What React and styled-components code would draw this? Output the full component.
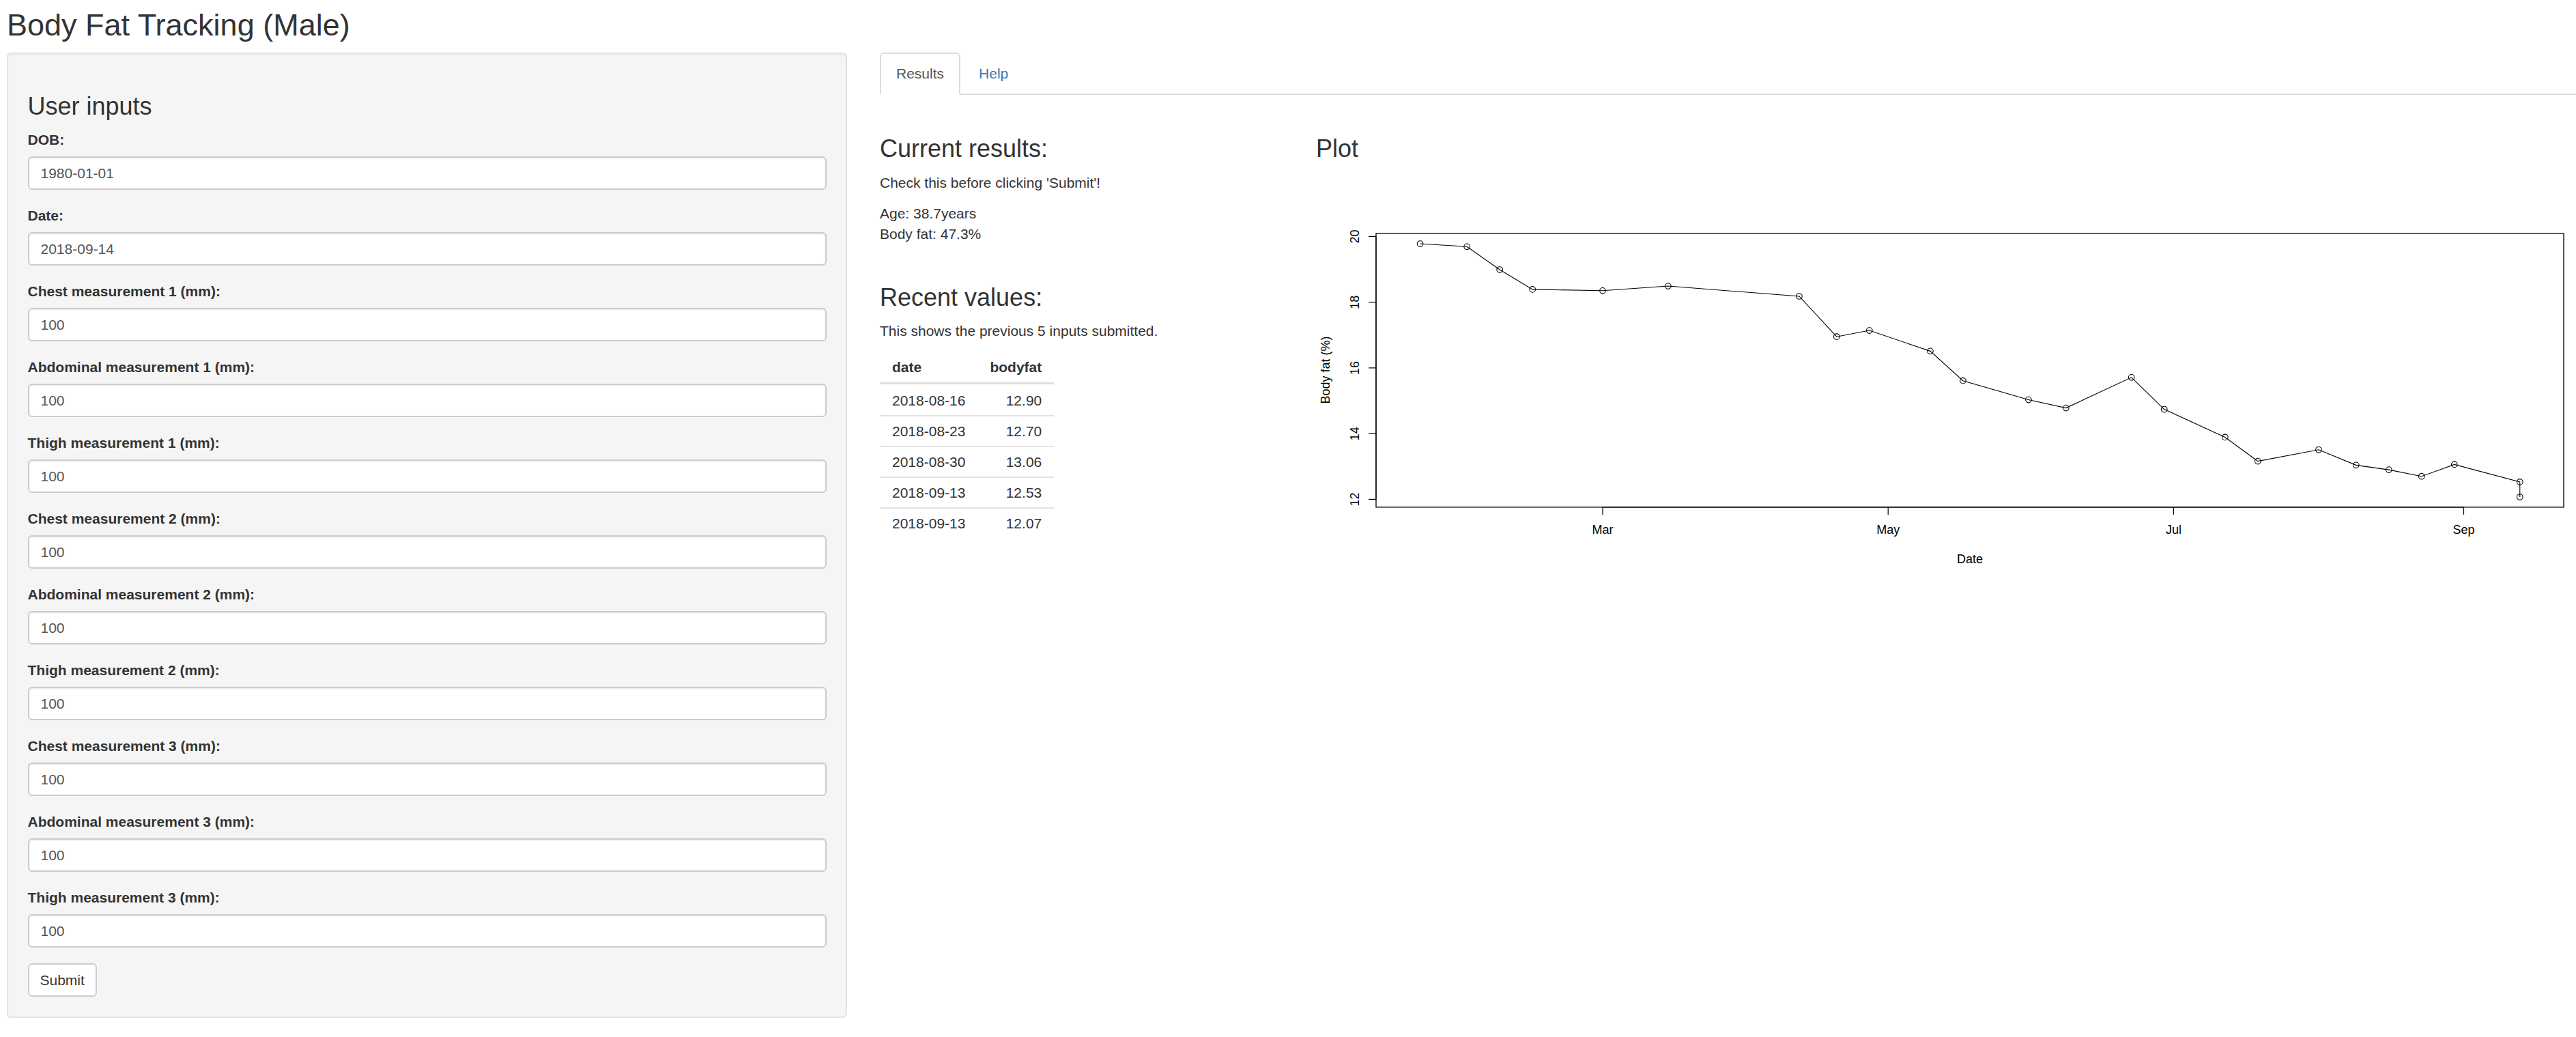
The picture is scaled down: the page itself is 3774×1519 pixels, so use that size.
import React from 'react';
import styled, { createGlobalStyle } from 'styled-components';

// Form fields shown in the sidebar
const fields = [
  { label: 'DOB:', value: '1980-01-01' },
  { label: 'Date:', value: '2018-09-14' },
  { label: 'Chest measurement 1 (mm):', value: '100' },
  { label: 'Abdominal measurement 1 (mm):', value: '100' },
  { label: 'Thigh measurement 1 (mm):', value: '100' },
  { label: 'Chest measurement 2 (mm):', value: '100' },
  { label: 'Abdominal measurement 2 (mm):', value: '100' },
  { label: 'Thigh measurement 2 (mm):', value: '100' },
  { label: 'Chest measurement 3 (mm):', value: '100' },
  { label: 'Abdominal measurement 3 (mm):', value: '100' },
  { label: 'Thigh measurement 3 (mm):', value: '100' }
];

const recent = [
  ['2018-08-16', '12.90'],
  ['2018-08-23', '12.70'],
  ['2018-08-30', '13.06'],
  ['2018-09-13', '12.53'],
  ['2018-09-13', '12.07']
];

// days from 1 March, body fat %
const series = [
  [-39, 19.78], [-29, 19.69], [-22, 18.99], [-15, 18.39], [0, 18.35],
  [14, 18.49], [42, 18.18], [50, 16.95], [57, 17.14], [70, 16.51],
  [77, 15.61], [91, 15.03], [99, 14.78], [113, 15.71], [120, 14.74],
  [133, 13.89], [140, 13.16], [153, 13.51], [161, 13.04], [168, 12.9],
  [175, 12.7], [182, 13.06], [196, 12.53], [196, 12.07]
];

const months = [
  { label: 'Mar', day: 0 },
  { label: 'May', day: 61 },
  { label: 'Jul', day: 122 },
  { label: 'Sep', day: 184 }
];

const px = (d) => 2348 + d * 6.856;
const py = (v) => 731 - (v - 12) * 48.125;

const GlobalStyle = createGlobalStyle`
  html, body {
    margin: 0;
    background: #fff;
    overflow: hidden;
  }
  body {
    font-family: "Liberation Sans", Arial, Helvetica, sans-serif;
    font-size: 21px;
    line-height: 30px;
    color: #333;
  }
`;

const BodyFatPlot = () => (
  <PlotSvg width="1846" height="600" viewBox="1928 252.6 1846 600">
    <rect x="2016" y="341.5" width="1740" height="401" fill="none" stroke="#000" strokeWidth="1.3" />

    {/* y axis */}
    <line x1="2016" y1={py(12)} x2="2016" y2={py(20)} stroke="#000" strokeWidth="1.2" />
    {[12, 14, 16, 18, 20].map((v) => (
      <g key={v}>
        <line x1="2005" y1={py(v)} x2="2016" y2={py(v)} stroke="#000" strokeWidth="1.2" />
        <AxisText x="1991" y={py(v)} textAnchor="middle" transform={`rotate(-90 1991 ${py(v)})`}>
          {v}
        </AxisText>
      </g>
    ))}
    <AxisText x="1948" y="541.5" textAnchor="middle" transform="rotate(-90 1948 541.5)">
      Body fat (%)
    </AxisText>

    {/* x axis */}
    <line x1={px(0)} y1="742.5" x2={px(184)} y2="742.5" stroke="#000" strokeWidth="1.2" />
    {months.map((m) => (
      <g key={m.label}>
        <line x1={px(m.day)} y1="742.5" x2={px(m.day)} y2="753.5" stroke="#000" strokeWidth="1.2" />
        <AxisText x={px(m.day)} y="782" textAnchor="middle">{m.label}</AxisText>
      </g>
    ))}
    <AxisText x="2886" y="825" textAnchor="middle">Date</AxisText>

    {/* data */}
    <polyline
      points={series.map(([d, v]) => `${px(d)},${py(v)}`).join(' ')}
      fill="none"
      stroke="#000"
      strokeWidth="1.1"
    />
    {series.map(([d, v], i) => (
      <circle key={i} cx={px(d)} cy={py(v)} r="4.3" fill="none" stroke="#000" strokeWidth="1.1" />
    ))}
  </PlotSvg>
);

const App = () => (
  <Page>
    <GlobalStyle />
    <Title>Body Fat Tracking (Male)</Title>
    <Layout>
      <Well>
        <SideHeading>User inputs</SideHeading>
        {fields.map((f) => (
          <FormGroup key={f.label}>
            <Label>{f.label}</Label>
            <TextInput type="text" defaultValue={f.value} />
          </FormGroup>
        ))}
        <SubmitButton type="button">Submit</SubmitButton>
      </Well>

      <Main>
        <TabList>
          <TabItem>
            <TabLink $active>Results</TabLink>
          </TabItem>
          <TabItem>
            <TabLink>Help</TabLink>
          </TabItem>
        </TabList>

        <TabBody>
          <ResultsCol>
            <Heading>Current results:</Heading>
            <Text>Check this before clicking 'Submit'!</Text>
            <Text>
              Age: 38.7years
              <br />
              Body fat: 47.3%
            </Text>

            <Heading $gap>Recent values:</Heading>
            <Text>This shows the previous 5 inputs submitted.</Text>
            <Table>
              <thead>
                <tr>
                  <Th>date</Th>
                  <Th $right>bodyfat</Th>
                </tr>
              </thead>
              <tbody>
                {recent.map(([date, fat], i) => (
                  <tr key={i}>
                    <Td>{date}</Td>
                    <Td $right>{fat}</Td>
                  </tr>
                ))}
              </tbody>
            </Table>
          </ResultsCol>

          <PlotCol>
            <Heading>Plot</Heading>
            <BodyFatPlot />
          </PlotCol>
        </TabBody>
      </Main>
    </Layout>
  </Page>
);

export default App;

// Styled Components

const Page = styled.div`
  padding: 12px 0 0 10px;
`;

const Title = styled.h2`
  margin: 0 0 15.5px;
  font-size: 45px;
  font-weight: 400;
  line-height: 49.5px;
  color: #333;
`;

const Layout = styled.div`
  display: flex;
  align-items: flex-start;
`;

const Well = styled.form`
  width: 1231px;
  flex: none;
  box-sizing: border-box;
  padding: 28.5px;
  background: #f5f5f5;
  border: 2px solid #e3e3e3;
  border-radius: 6px;
  box-shadow: inset 0 1.5px 1.5px rgba(0, 0, 0, 0.05);
`;

const SideHeading = styled.h3`
  margin: 28px 0 15px;
  font-size: 36px;
  font-weight: 400;
  line-height: 39.6px;
`;

const FormGroup = styled.div`
  margin-bottom: 23px;
`;

const Label = styled.label`
  display: block;
  margin-bottom: 9px;
  font-weight: 700;
  line-height: 30px;
`;

const TextInput = styled.input`
  display: block;
  width: 100%;
  height: 49px;
  box-sizing: border-box;
  padding: 0 17px;
  font-family: inherit;
  font-size: 21px;
  color: #555;
  background: #fff;
  border: 2px solid #ccc;
  border-radius: 6px;
  box-shadow: inset 0 1.5px 1.5px rgba(0, 0, 0, 0.075);
  outline: none;
`;

const SubmitButton = styled.button`
  display: block;
  height: 49px;
  padding: 0 16px;
  font-family: inherit;
  font-size: 21px;
  line-height: 30px;
  color: #333;
  background: #fff;
  border: 2px solid #ccc;
  border-radius: 6px;
  cursor: pointer;
`;

const Main = styled.div`
  flex: 1;
  min-width: 0;
  margin-left: 48px;
`;

const TabList = styled.ul`
  display: flex;
  margin: 0;
  padding: 0;
  list-style: none;
  border-bottom: 2px solid #ddd;
`;

const TabItem = styled.li`
  margin: 0 3px -2px 0;
`;

const TabLink = styled.a`
  display: block;
  padding: 14px 22px;
  line-height: 30px;
  color: ${(p) => (p.$active ? '#555' : '#337ab7')};
  background: ${(p) => (p.$active ? '#fff' : 'transparent')};
  border: 2px solid ${(p) => (p.$active ? '#ddd' : 'transparent')};
  border-bottom-color: transparent;
  border-radius: 6px 6px 0 0;
  cursor: pointer;
`;

const TabBody = styled.div`
  display: flex;
  padding-top: 59px;
`;

const ResultsCol = styled.div`
  width: 639px;
  flex: none;
`;

const Heading = styled.h3`
  margin: ${(p) => (p.$gap ? '58px' : '0')} 0 15px;
  font-size: 36px;
  font-weight: 400;
  line-height: 39.6px;
`;

const Text = styled.p`
  margin: 0 0 15px;
`;

const Table = styled.table`
  border-collapse: collapse;
  border-spacing: 0;

  tbody tr:first-child td {
    border-top: none;
    padding-top: 8.5px;
  }
`;

const Th = styled.th`
  padding: 7.5px 18px;
  font-weight: 700;
  line-height: 30px;
  text-align: ${(p) => (p.$right ? 'right' : 'left')};
  border-bottom: 3px solid #ddd;
`;

const Td = styled.td`
  padding: 6.5px 18px;
  line-height: 30px;
  text-align: ${(p) => (p.$right ? 'right' : 'left')};
  border-top: 2px solid #e3e3e3;
`;

const PlotCol = styled.div`
  flex: 1;
  min-width: 0;
`;

const PlotSvg = styled.svg`
  display: block;
`;

const AxisText = styled.text`
  font-family: "Liberation Sans", Arial, Helvetica, sans-serif;
  font-size: 18px;
  fill: #000;
`;
